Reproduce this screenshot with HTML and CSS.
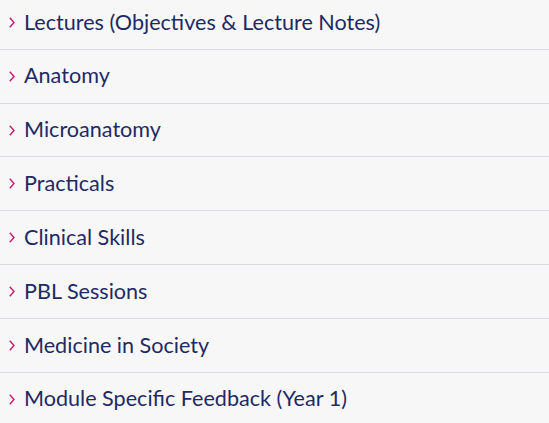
FILE: index.html
```html
<!DOCTYPE html>
<html>
<head>
<meta charset="utf-8">
<link rel="stylesheet" href="styles.css">
</head>
<body>
<ul class="list">
  <li class="item"><span class="chev"><svg width="6" height="11" viewBox="0 0 6 11"><path d="M0.8 0.8 L5 5.5 L0.8 10.2" fill="none" stroke="#c8196d" stroke-width="1.4"/></svg></span><span class="label">Lectures (Objectives &amp; Lecture Notes)</span></li>
  <li class="item"><span class="chev"><svg width="6" height="11" viewBox="0 0 6 11"><path d="M0.8 0.8 L5 5.5 L0.8 10.2" fill="none" stroke="#c8196d" stroke-width="1.4"/></svg></span><span class="label">Anatomy</span></li>
  <li class="item"><span class="chev"><svg width="6" height="11" viewBox="0 0 6 11"><path d="M0.8 0.8 L5 5.5 L0.8 10.2" fill="none" stroke="#c8196d" stroke-width="1.4"/></svg></span><span class="label">Microanatomy</span></li>
  <li class="item"><span class="chev"><svg width="6" height="11" viewBox="0 0 6 11"><path d="M0.8 0.8 L5 5.5 L0.8 10.2" fill="none" stroke="#c8196d" stroke-width="1.4"/></svg></span><span class="label">Practicals</span></li>
  <li class="item"><span class="chev"><svg width="6" height="11" viewBox="0 0 6 11"><path d="M0.8 0.8 L5 5.5 L0.8 10.2" fill="none" stroke="#c8196d" stroke-width="1.4"/></svg></span><span class="label">Clinical Skills</span></li>
  <li class="item"><span class="chev"><svg width="6" height="11" viewBox="0 0 6 11"><path d="M0.8 0.8 L5 5.5 L0.8 10.2" fill="none" stroke="#c8196d" stroke-width="1.4"/></svg></span><span class="label">PBL Sessions</span></li>
  <li class="item"><span class="chev"><svg width="6" height="11" viewBox="0 0 6 11"><path d="M0.8 0.8 L5 5.5 L0.8 10.2" fill="none" stroke="#c8196d" stroke-width="1.4"/></svg></span><span class="label">Medicine in Society</span></li>
  <li class="item"><span class="chev"><svg width="6" height="11" viewBox="0 0 6 11"><path d="M0.8 0.8 L5 5.5 L0.8 10.2" fill="none" stroke="#c8196d" stroke-width="1.4"/></svg></span><span class="label">Module Specific Feedback (Year 1)</span></li>
</ul>
</body>
</html>
```
FILE: styles.css
```css
html, body {
  margin: 0;
  padding: 0;
  background: #f7f7f7;
  overflow: hidden;
}
.list {
  list-style: none;
  margin: -4px 0 0 0;
  padding: 0;
}
.item {
  display: flex;
  align-items: center;
  height: 52.83px;
  border-bottom: 1px solid #d8dce1;
  padding-left: 9px;
  font-family: "Lato", "Liberation Sans", sans-serif;
  font-size: 21.6px;
  color: #1e2a64;
}
.chev {
  display: flex;
  width: 15px;
}
.label {
  line-height: 1;
}
```
